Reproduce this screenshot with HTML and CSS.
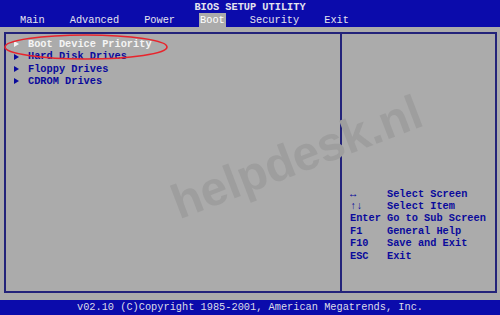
FILE: index.html
```html
<!DOCTYPE html>
<html lang="en">
<head>
    <meta charset="UTF-8">
    <title>BIOS Setup Utility</title>
    <link rel="stylesheet" href="styles.css">
</head>
<body>
    <!-- Top bar with title and menu -->
    <header class="top-bar">
        <div class="title">BIOS SETUP UTILITY</div>
        <nav class="menu">
            <span class="menu-item">Main</span>
            <span class="menu-item">Advanced</span>
            <span class="menu-item">Power</span>
            <span class="menu-item active">Boot</span>
            <span class="menu-item">Security</span>
            <span class="menu-item">Exit</span>
        </nav>
    </header>

    <!-- Main screen -->
    <main class="screen">
        <div class="frame">
            <section class="options">
                <div class="option selected"><span class="arrow"></span>Boot Device Priority</div>
                <div class="option"><span class="arrow"></span>Hard Disk Drives</div>
                <div class="option"><span class="arrow"></span>Floppy Drives</div>
                <div class="option"><span class="arrow"></span>CDROM Drives</div>
            </section>
            <aside class="help">
                <div class="help-row"><span class="key">&harr;</span>Select Screen</div>
                <div class="help-row"><span class="key">&uarr;&darr;</span>Select Item</div>
                <div class="help-row"><span class="key">Enter</span>Go to Sub Screen</div>
                <div class="help-row"><span class="key">F1</span>General Help</div>
                <div class="help-row"><span class="key">F10</span>Save and Exit</div>
                <div class="help-row"><span class="key">ESC</span>Exit</div>
            </aside>
        </div>

        <!-- overlays: red ring and watermark -->
        <svg class="ring" width="172" height="30" viewBox="0 0 172 30">
            <ellipse cx="86" cy="15" rx="81" ry="12" fill="none" stroke="#e8242c" stroke-width="1.6"/>
        </svg>
        <div class="watermark">helpdesk.nl</div>
    </main>

    <footer class="bottom-bar">v02.10 (C)Copyright 1985-2001, American Megatrends, Inc.</footer>
</body>
</html>
```

FILE: styles.css
```css
/* General */
body {
    margin: 0;
    width: 500px;
    height: 315px;
    display: flex;
    flex-direction: column;
    background-color: #ababab;
    font-family: 'Liberation Mono', 'DejaVu Sans Mono', monospace;
    font-size: 10.3px;
    font-weight: bold;
    color: #0a0a9c;
    overflow: hidden;
}

/* Top bar */
.top-bar {
    background-color: #0b0bab;
    color: #e4e4ee;
    height: 27px;
}

.title {
    text-align: center;
    height: 12px;
    line-height: 12px;
    padding-top: 1px;
}

.menu {
    display: flex;
    gap: 25px;
    padding-left: 20px;
    height: 14px;
    line-height: 14px;
}

.menu-item {
    font-weight: normal;
}

.menu-item.active {
    background-color: #ababab;
    color: #ffffff;
    padding: 0 1px;
    margin: 0 -1px;
}

/* Main screen */
.screen {
    flex: 1;
    position: relative;
    padding: 5px 3px 7px 4px;
    display: flex;
}

.frame {
    flex: 1;
    display: flex;
    border: 2px solid #23237a;
}

.options {
    box-sizing: border-box;
    width: 336px;
    border-right: 2px solid #23237a;
    padding: 4px 0 0 8px;
}

.option {
    height: 12.4px;
    line-height: 12.4px;
    display: flex;
    align-items: center;
}

.option.selected {
    color: #f4f4f4;
}

.arrow {
    width: 0;
    height: 0;
    border-top: 3.5px solid transparent;
    border-bottom: 3.5px solid transparent;
    border-left: 5px solid currentColor;
    margin-right: 9px;
}

/* Help panel */
.help {
    flex: 1;
    display: flex;
    flex-direction: column;
    justify-content: flex-end;
    padding: 0 0 29px 8px;
}

.help-row {
    height: 12.4px;
    line-height: 12.4px;
    white-space: pre;
}

.key {
    display: inline-block;
    width: 37px;
}

/* Overlays */
.ring {
    position: absolute;
    left: 0;
    top: 5px;
}

.watermark {
    position: absolute;
    left: 182px;
    top: 152px;
    font-family: 'Liberation Sans', Arial, sans-serif;
    font-size: 48px;
    font-weight: bold;
    color: #9e9e9e;
    transform: rotate(-21deg);
    transform-origin: left bottom;
    line-height: 1;
}

/* Bottom bar */
.bottom-bar {
    background-color: #0b0bab;
    color: #dcdce8;
    height: 15px;
    line-height: 15px;
    text-align: center;
    font-weight: normal;
}
```
